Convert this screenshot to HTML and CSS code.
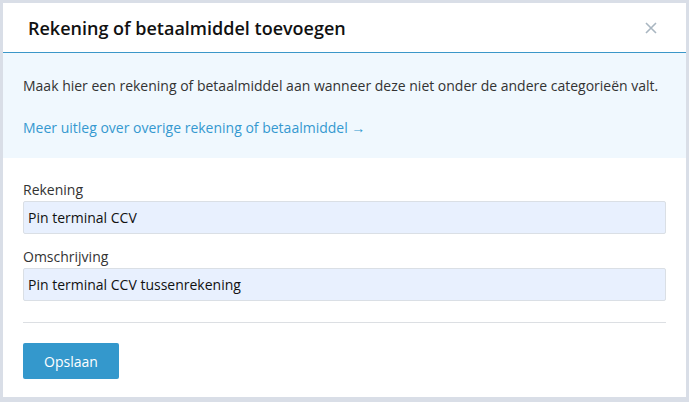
FILE: index.html
```html
<!DOCTYPE html>
<html lang="nl">
<head>
    <meta charset="UTF-8">
    <meta name="viewport" content="width=device-width, initial-scale=1.0">
    <title>Rekening of betaalmiddel toevoegen</title>
    <link rel="stylesheet" href="styles.css">
</head>
<body>
    <div class="modal">
        <div class="modal-header">
            <h2>Rekening of betaalmiddel toevoegen</h2>
            <button class="close" type="button" aria-label="Sluiten">
                <svg width="12" height="12" viewBox="0 0 12 12">
                    <path d="M1 1L11 11M11 1L1 11" stroke="#a9b6c1" stroke-width="1.6" fill="none"/>
                </svg>
            </button>
        </div>

        <div class="intro">
            <p>Maak hier een rekening of betaalmiddel aan wanneer deze niet onder de andere categorieën valt.</p>
            <a href="#">Meer uitleg over overige rekening of betaalmiddel &rarr;</a>
        </div>

        <form class="modal-form">
            <label for="rekening">Rekening</label>
            <input type="text" id="rekening" value="Pin terminal CCV">

            <label for="omschrijving">Omschrijving</label>
            <input type="text" id="omschrijving" value="Pin terminal CCV tussenrekening">

            <hr>

            <button type="submit" class="save">Opslaan</button>
        </form>
    </div>
</body>
</html>
```

FILE: styles.css
```css
body {
    margin: 0;
    padding: 3px;
    background-color: #d9dee7;
    font-family: "Open Sans", Arial, sans-serif;
    color: #222;
}
.modal {
    background-color: #fff;
    height: 394px;
}
.modal-header {
    display: flex;
    align-items: center;
    justify-content: space-between;
    height: 49px;
    padding: 0 29px 0 25px;
    border-bottom: 1px solid #3b97c9;
}
.modal-header h2 {
    margin: 0;
    font-size: 18px;
    font-weight: 600;
    color: #111;
}
.close {
    background: none;
    border: none;
    padding: 0;
    display: flex;
}
.intro {
    background-color: #f0f8fe;
    height: 105px;
    box-sizing: border-box;
    padding: 23px 20px 0;
    font-size: 14px;
}
.intro p {
    margin: 0 0 23px;
    line-height: 19px;
    color: #333;
}
.intro a {
    color: #3598d0;
    text-decoration: none;
    line-height: 19px;
}
.modal-form {
    padding: 22px 20px 0;
}
label {
    display: block;
    font-size: 14px;
    line-height: 19px;
    color: #333;
    margin-bottom: 2px;
}
input {
    display: block;
    width: 100%;
    box-sizing: border-box;
    height: 33px;
    padding: 0 4px;
    margin-bottom: 13px;
    background-color: #e8f0fe;
    border: 1px solid #dadfe5;
    border-radius: 2px;
    font-family: inherit;
    font-size: 14px;
    color: #111;
}
hr {
    border: none;
    border-top: 1px solid #dcdfe3;
    margin: 21px 0 20px;
}
.save {
    height: 36px;
    width: 96px;
    background-color: #3498cc;
    color: #fff;
    border: none;
    border-radius: 2px;
    font-family: inherit;
    font-size: 14px;
    cursor: pointer;
}
```
